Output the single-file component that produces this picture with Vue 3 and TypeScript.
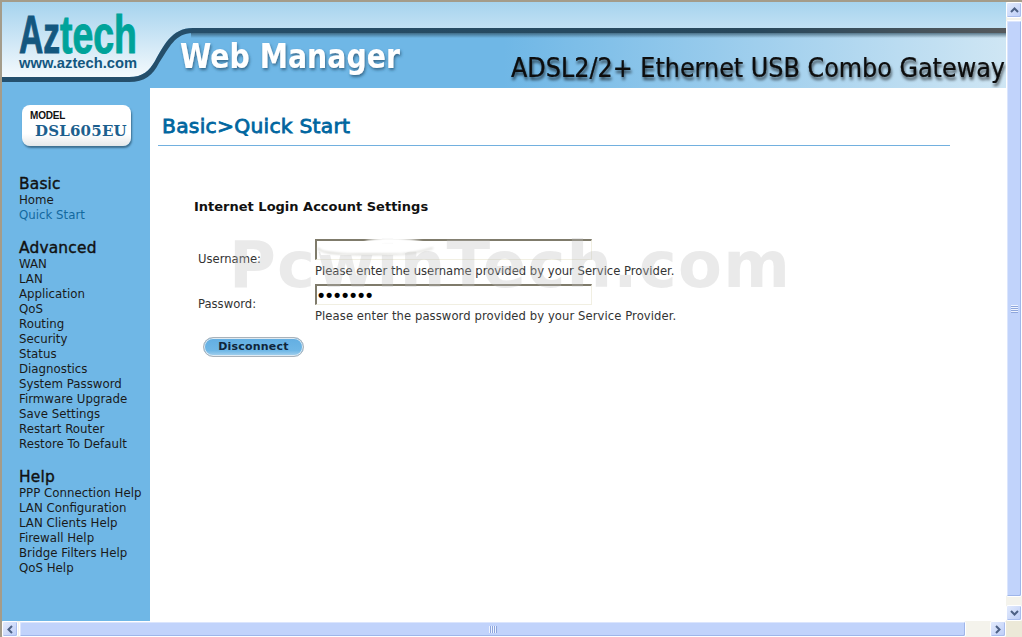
<script setup lang="ts">
interface NavGroup { title: string; items: string[] }
const groups: NavGroup[] = [
  { title: 'Basic', items: ['Home', 'Quick Start'] },
  { title: 'Advanced', items: ['WAN', 'LAN', 'Application', 'QoS', 'Routing', 'Security', 'Status', 'Diagnostics', 'System Password', 'Firmware Upgrade', 'Save Settings', 'Restart Router', 'Restore To Default'] },
  { title: 'Help', items: ['PPP Connection Help', 'LAN Configuration', 'LAN Clients Help', 'Firewall Help', 'Bridge Filters Help', 'QoS Help'] },
]
</script>

<template>
  <div class="window">
    <div class="middle">
      <main class="page">
        <svg class="banner" width="1004" height="86" viewBox="-1 -1 1004 86" xmlns="http://www.w3.org/2000/svg">
          <defs>
            <linearGradient id="sky" x1="0" y1="0" x2="0" y2="1">
              <stop offset="0" stop-color="#a6d3ee" />
              <stop offset="1" stop-color="#ffffff" />
            </linearGradient>
            <linearGradient id="blue" x1="0" y1="0" x2="1" y2="0">
              <stop offset="0" stop-color="#6fb7e6" />
              <stop offset="0.5" stop-color="#6fb7e6" />
              <stop offset="1" stop-color="#cfe6f4" />
            </linearGradient>
            <linearGradient id="band" x1="0" y1="0" x2="1" y2="0">
              <stop offset="0" stop-color="#24506e" />
              <stop offset="0.75" stop-color="#28485c" />
              <stop offset="1" stop-color="#55595c" />
            </linearGradient>
            <linearGradient id="fade" x1="0" y1="0" x2="0" y2="1">
              <stop offset="0" stop-color="#2b4a5c" stop-opacity="0.7" />
              <stop offset="1" stop-color="#2b4a5c" stop-opacity="0" />
            </linearGradient>
            <filter id="soft" x="-10%" y="-20%" width="120%" height="160%">
              <feDropShadow dx="1" dy="2" stdDeviation="1.6" flood-color="#24506e" flood-opacity="0.75" />
            </filter>
            <filter id="softdark" x="-10%" y="-20%" width="120%" height="160%">
              <feDropShadow dx="1" dy="3" stdDeviation="1.8" flood-color="#000" flood-opacity="0.65" />
            </filter>
          </defs>
          <rect x="-1" y="-1" width="1004" height="86" fill="url(#sky)" />
          <path d="M-1 74 H126 C140 74 146 68 152 58 C160 44 168 25 190 25 H1003 V85 H-1 Z" fill="url(#blue)" />
          <path d="M-1 74 H126 C140 74 146 68 152 58 C160 44 168 25 190 25 H1003 V30 H190 C172 30 166 45 156 60 C150 72 142 79 126 79 H-1 Z" fill="url(#band)" />
          <rect x="188" y="30" width="815" height="5" fill="url(#fade)" />
          <text x="16" y="50" class="logo logo-az" textLength="41" lengthAdjust="spacingAndGlyphs">Az</text>
          <text x="57" y="50" class="logo logo-tech" textLength="77" lengthAdjust="spacingAndGlyphs">tech</text>
          <text x="16" y="65" class="logo-url" textLength="118" lengthAdjust="spacingAndGlyphs">www.aztech.com</text>
          <text x="177" y="65" class="web" textLength="220" lengthAdjust="spacingAndGlyphs" filter="url(#soft)">Web Manager</text>
          <text x="508" y="74" class="model-name" textLength="494" lengthAdjust="spacingAndGlyphs" filter="url(#softdark)">ADSL2/2+ Ethernet USB Combo Gateway</text>
        </svg>

        <div class="body">
          <nav class="sidebar">
            <div class="badge">
              <span class="badge-label">MODEL</span>
              <span class="badge-name">DSL605EU</span>
            </div>
            <section v-for="g in groups" :key="g.title" class="group">
              <h3>{{ g.title }}</h3>
              <a v-for="item in g.items" :key="item" :class="{ active: item === 'Quick Start' }">{{ item }}</a>
            </section>
          </nav>

          <div class="content">
            <h1>Basic&gt;Quick Start</h1>
            <hr />
            <h2>Internet Login Account Settings</h2>
            <form class="form" @submit.prevent>
              <label class="lbl first">Username:</label>
              <div class="field">
                <div class="input"></div>
                <p>Please enter the username provided by your Service Provider.</p>
              </div>
              <label class="lbl">Password:</label>
              <div class="field">
                <div class="input dots">•••••••</div>
                <p class="wide">Please enter the password provided by your Service Provider.</p>
              </div>
            </form>
            <button class="btn" type="button">Disconnect</button>
          </div>
        </div>

        <div class="watermark">PcwinTech.com</div>

        <svg class="smudge" width="124" height="30" viewBox="0 0 124 30" xmlns="http://www.w3.org/2000/svg">
          <defs><filter id="bl" x="-10%" y="-40%" width="120%" height="180%"><feGaussianBlur stdDeviation="0.8" /></filter></defs>
          <path d="M3 8 H108 C100 13 92 17 84 19 H6 Z" fill="#fff" />
          <path d="M50 5.5 C62 0 90 1 108 5.5 C90 9 70 9 50 8.5 Z" fill="#fff" filter="url(#bl)" />
          <path d="M3 12 C6 19 40 19 88 18 C100 17 108 15 118 12" fill="none" stroke="#c9c9c3" stroke-width="1.2" filter="url(#bl)" />
        </svg>
      </main>

      <div class="vbar">
        <div class="sb-btn">
          <svg width="9" height="6" viewBox="0 0 9 6"><path d="M1 5 L4.5 1.5 L8 5" fill="none" stroke="#4d6185" stroke-width="2" /></svg>
        </div>
        <div class="thumb v"><i class="grip-v"></i></div>
        <div class="sb-btn">
          <svg width="9" height="6" viewBox="0 0 9 6"><path d="M1 1 L4.5 4.5 L8 1" fill="none" stroke="#4d6185" stroke-width="2" /></svg>
        </div>
      </div>
    </div>

    <div class="hbar">
      <div class="sb-btn">
        <svg width="6" height="9" viewBox="0 0 6 9"><path d="M5 1 L1.5 4.5 L5 8" fill="none" stroke="#4d6185" stroke-width="2" /></svg>
      </div>
      <div class="thumb h"><i class="grip-h"></i></div>
      <div class="sb-btn">
        <svg width="6" height="9" viewBox="0 0 6 9"><path d="M1 1 L4.5 4.5 L1 8" fill="none" stroke="#4d6185" stroke-width="2" /></svg>
      </div>
      <div class="corner"></div>
    </div>
  </div>
</template>

<style scoped>
.window {
  width: 1022px;
  height: 637px;
  display: flex;
  flex-direction: column;
  box-sizing: border-box;
  border-top: 2px solid #a49c8a;
  border-left: 2px solid #a49c8a;
  background: #fff;
  overflow: hidden;
  font-family: "DejaVu Sans", Verdana, sans-serif;
  color: #1a1a1a;
}
.middle { flex: 1; display: flex; min-height: 0; }
.page { position: relative; width: 1004px; display: flex; flex-direction: column; overflow: hidden; }
.banner { display: block; flex: none; }
.logo { font-family: "Liberation Sans", Arial, sans-serif; font-weight: 700; font-size: 54px; stroke-width: 1px; }
.logo-az { fill: #14577f; stroke: #14577f; }
.logo-tech { fill: #00a39a; stroke: #00a39a; }
.logo-url { font-family: "Liberation Sans", Arial, sans-serif; font-weight: 700; font-size: 15px; fill: #14577f; }
.web { font-family: "DejaVu Sans", sans-serif; font-weight: 700; font-size: 33px; fill: #fff; }
.model-name { font-family: "DejaVu Sans", sans-serif; font-size: 26px; fill: #0a0a0a; stroke: #0a0a0a; stroke-width: 0.2px; }

.body { flex: 1; display: flex; min-height: 0; background: #fff; }
.sidebar { width: 148px; flex: none; background: #6fb7e6; padding: 17px 0 0 17px; box-sizing: border-box; }
.badge {
  width: 109px; height: 41px; margin-left: 3px; margin-bottom: 29px; box-sizing: border-box;
  background: linear-gradient(#fff 70%, #e4e8ea); border-radius: 8px;
  box-shadow: 1px 2px 2px #3c6f90;
  display: flex; flex-direction: column; padding: 5px 0 0 8px;
}
.badge-label { font: 700 10px/12px "Liberation Sans", Arial, sans-serif; color: #111; letter-spacing: -0.2px; }
.badge-name { font: 700 15px/19px "DejaVu Serif", serif; color: #1c5f8e; margin-left: 5px; letter-spacing: 0.2px; }
.group { margin-bottom: 16px; display: flex; flex-direction: column; align-items: flex-start; }
.group h3 { margin: 0; font-size: 15.4px; line-height: 18px; font-weight: 400; -webkit-text-stroke: 0.4px #111; color: #111; letter-spacing: 0.2px; }
.group a { font-size: 11.8px; line-height: 15px; color: #1a1a1a; }
.group a.active { color: #13699f; }

.content { flex: 1; position: relative; padding: 25px 0 0 8px; min-width: 0; }
h1 { margin: 0 0 0 4px; font-size: 20.3px; line-height: 27px; font-weight: 400; -webkit-text-stroke: 0.8px #00669f; color: #00669f; letter-spacing: 0.25px; white-space: nowrap; }
hr { width: 792px; height: 1px; margin: 5px 0 0; border: 0; background: #72b0df; }
h2 { margin: 52px 0 0 36px; font-size: 13px; line-height: 17px; font-weight: 700; color: #111; }
.form { display: grid; grid-template-columns: 117px 340px; margin: 24px 0 0 40px; row-gap: 5px; font-size: 11.6px; }
.lbl { line-height: 15px; padding-top: 13px; color: #333; }
.field p { margin: 0; font-size: 11.6px; line-height: 15px; color: #333; white-space: nowrap; }
.field p.wide { letter-spacing: 0.08px; }
.input {
  width: 277px; height: 21px; box-sizing: border-box; background: transparent;
  border: 2px solid #f1efe2; border-top-color: #7f7b6b; border-left-color: #7f7b6b; border-right-width: 1px; border-bottom-width: 1px;
  margin-bottom: 4px;
}
.dots { font: 700 18px/18px "Liberation Sans", Arial, sans-serif; color: #000; padding-left: 1px; letter-spacing: 1.7px; overflow: hidden; }
.btn {
  display: block; margin: 13px 0 0 45px; width: 101px; height: 20px; padding: 0;
  border: 1px solid #a9b2ba; border-radius: 10px;
  background: linear-gradient(#62aee2, #6fb7e6 70%, #a8d2ee);
  box-shadow: inset 0 0 0 1px #dfeaf2;
  font: 700 11px/16px "DejaVu Sans", sans-serif; color: #10253a; letter-spacing: 0.2px;
}
.smudge { position: absolute; left: 313px; top: 234px; }
.watermark {
  position: absolute; left: 227px; top: 228px;
  font: 700 64px/70px "DejaVu Sans", sans-serif; letter-spacing: 1.2px;
  color: rgba(190, 190, 190, 0.32); white-space: nowrap; pointer-events: none;
}

.vbar { width: 16px; flex: none; background: #f4f3ec; display: flex; flex-direction: column; }
.hbar { height: 16px; flex: none; display: flex; background: #f4f3ec; }
.sb-btn {
  width: 16px; height: 16px; flex: none; box-sizing: border-box;
  display: flex; align-items: center; justify-content: center;
  background: linear-gradient(135deg, #e3ebfd, #bccdf7);
  border: 1px solid #fff; border-radius: 2px; box-shadow: inset -1px -1px 0 #a9bdee;
}
.thumb {
  box-sizing: border-box; flex: 1; background: #c1d3fb;
  border: 1px solid #fff; border-radius: 2px; box-shadow: inset -1px -1px 0 #9fb6ea, inset 1px 1px 0 #dbe5fd;
  display: flex; align-items: center; justify-content: center;
}
.thumb.v { margin: 2px 0 8px; }
.thumb.h { margin: 0 24px 0 1px; }
.grip-v { width: 7px; height: 8px; background: repeating-linear-gradient(#eef3ff 0 1px, #8ea6dc 1px 2px); }
.grip-h { width: 8px; height: 7px; background: repeating-linear-gradient(90deg, #eef3ff 0 1px, #8ea6dc 1px 2px); }
.corner { width: 16px; flex: none; background: #ece9d8; }
</style>
